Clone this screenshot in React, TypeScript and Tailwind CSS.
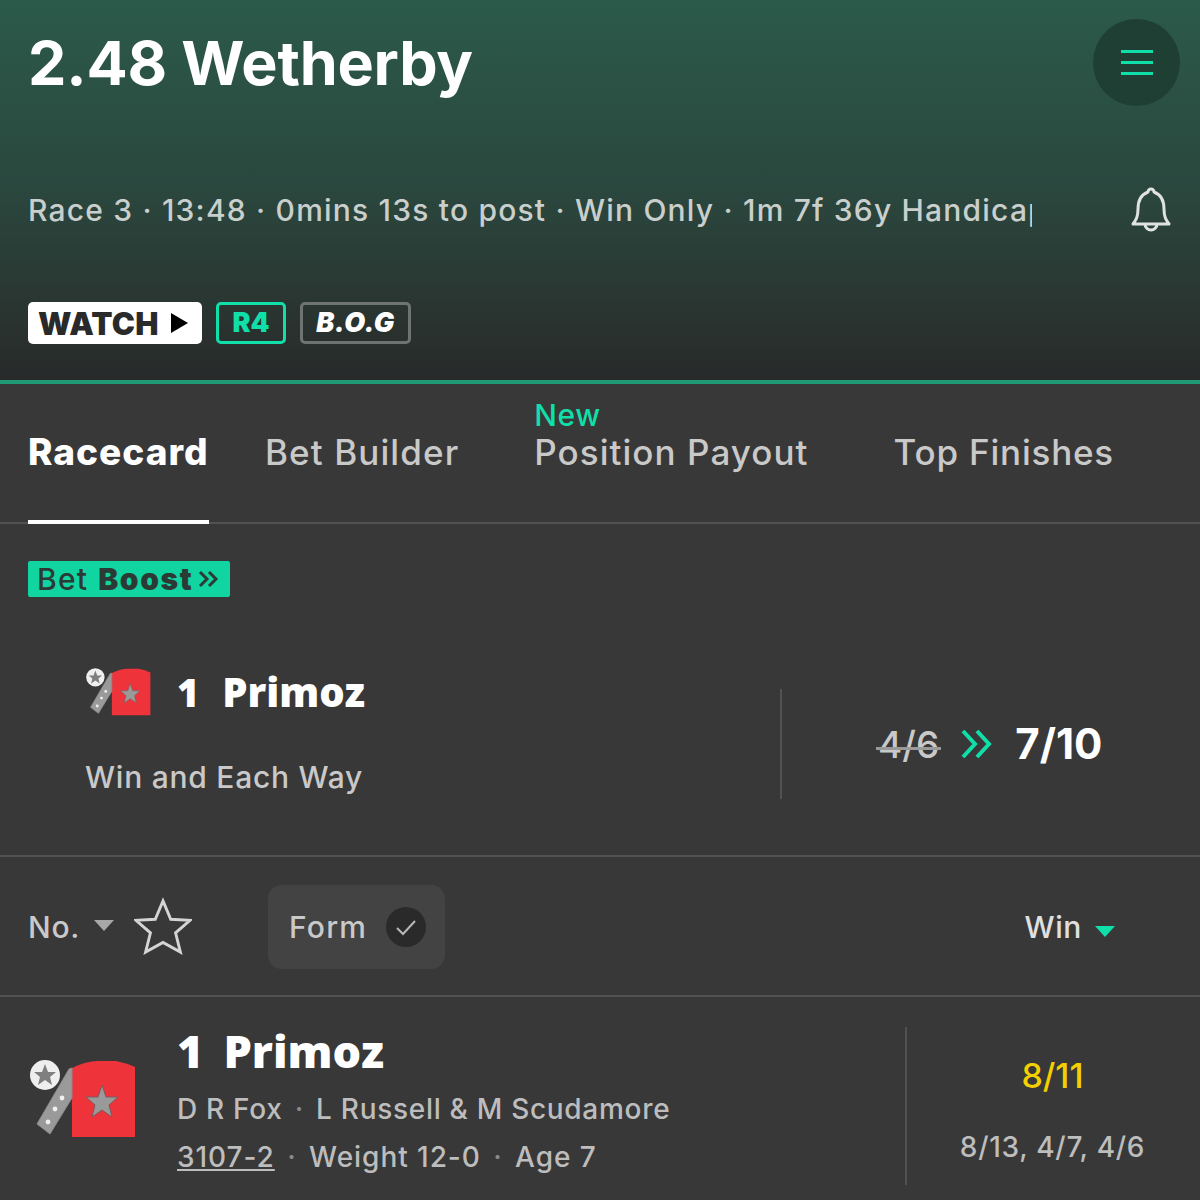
import React from "react";

function Silk({ scale }: { scale: "lg" | "sm" }) {
  const cls = scale === "lg" ? "w-[108px] h-[78px]" : "w-[66px] h-[48px]";
  return (
    <svg viewBox="0 0 108 78" className={cls}>
      <path d="M44 8 Q58 1 70 1 L88 1 Q98 3 107 7 L107 77 L44 77 Z" fill="#ee333b" />
      <path d="M41 9 L44 8 L44 38 L22 74 L9 64 Z" fill="#9a9a9a" stroke="#8a8a8a" />
      <circle cx="34" cy="38" r="2.4" fill="#eee" />
      <circle cx="27" cy="49" r="2.4" fill="#eee" />
      <circle cx="20" cy="62" r="2.4" fill="#eee" />
      <circle cx="17" cy="15" r="15" fill="#efefef" />
      <path d="M17 4 L20 12 L28 12 L22 17 L24 25 L17 20 L10 25 L12 17 L6 12 L14 12 Z" fill="#7f7f7f" />
      <path d="M74 25 L78 37 L90 37 L81 45 L84 57 L74 50 L64 57 L67 45 L58 37 L70 37 Z" fill="#9a9a9a" stroke="#7c5a5c" strokeWidth="1" />
    </svg>
  );
}

export default function App() {
  const inter = { fontFamily: 'Inter, "Liberation Sans", sans-serif' };
  const open = { fontFamily: '"Open Sans", "Noto Sans", sans-serif' };
  return (
    <div className="w-[1200px] h-[1200px] overflow-hidden bg-[#383838]" style={inter}>
      <header className="h-[384px] border-b-4 border-[#1f9a74] bg-gradient-to-b from-[#2b5a4a] via-[#2a473e] to-[#282a2a] pl-7 pr-[20px] pt-[20px] flex flex-col">
        <div className="flex justify-between items-start h-[86px]">
          <h1 className="text-[61px] leading-[86px] font-bold text-white tracking-[-0.2px] whitespace-nowrap">2.48 Wetherby</h1>
          <button className="w-[87px] h-[87px] -mt-[1px] rounded-full bg-[#1f3f35] flex flex-col items-center justify-center gap-[8px]">
            <span className="block w-[32px] h-[3px] bg-[#10dfa9]" />
            <span className="block w-[32px] h-[3px] bg-[#10dfa9]" />
            <span className="block w-[32px] h-[3px] bg-[#10dfa9]" />
          </button>
        </div>
        <div className="flex justify-between items-center mt-[79px] h-[50px]">
          <div className="w-[1004px] overflow-hidden whitespace-nowrap text-[30px] leading-[50px] font-medium text-[#c9cfcc] tracking-[1.2px]">
            Race 3 · 13:48 · 0mins 13s to post · Win Only · 1m 7f 36y Handicap
          </div>
          <svg viewBox="0 0 40 46" className="w-[40px] h-[46px] mr-[9px] fill-none stroke-[#dfe3e1] stroke-[3]">
            <path d="M20 2 a3 3 0 0 1 3 3 C31 8 33 15 33 22 C33 30 35 33 38 37 H2 C5 33 7 30 7 22 C7 15 9 8 17 5 a3 3 0 0 1 3 -3 Z" strokeLinejoin="round" />
            <path d="M14 37 a6 6 0 0 0 12 0" />
          </svg>
        </div>
        <div className="flex items-center gap-[14px] mt-[67px]">
          <div className="h-[42px] w-[174px] bg-white rounded-[5px] flex items-center pl-[10px] gap-[12px]">
            <span className="text-[31px] font-black text-[#2a2a2a] leading-none tracking-[0.3px]">WATCH</span>
            <span className="w-0 h-0 border-y-[10px] border-y-transparent border-l-[17px] border-l-black" />
          </div>
          <div className="h-[42px] w-[70px] border-[3px] border-[#10dfa9] rounded-[5px] flex items-center justify-center text-[27px] font-black text-[#10dfa9]">R4</div>
          <div className="h-[42px] w-[111px] border-[3px] border-[#6e7472] rounded-[5px] flex items-center justify-center text-[27px] font-black italic text-white tracking-[0.5px]">B.O.G</div>
        </div>
      </header>

      <nav className="h-[140px] border-b-2 border-[#525252] flex pl-7">
        <div className="w-[181px] h-[140px] border-b-4 border-white pt-[44px] shrink-0">
          <span className="text-[37px] leading-[48px] font-extrabold text-white whitespace-nowrap tracking-[1px]">Racecard</span>
        </div>
        <div className="ml-[56px] pt-[44px] text-[35px] leading-[48px] font-medium text-[#c9c9c9] whitespace-nowrap tracking-[1.1px]">Bet Builder</div>
        <div className="ml-[75px] relative pt-[44px] text-[35px] leading-[48px] font-medium text-[#c9c9c9] whitespace-nowrap tracking-[1.05px]">
          <span className="absolute left-0 top-[13px] text-[30px] leading-[36px] font-medium text-[#10dfa9] tracking-[0.6px]">New</span>
          Position Payout
        </div>
        <div className="ml-[85px] pt-[44px] text-[35px] leading-[48px] font-medium text-[#c9c9c9] whitespace-nowrap tracking-[0.8px]">Top Finishes</div>
      </nav>

      <section className="h-[333px] border-b-2 border-[#525252] flex flex-col pl-7">
        <div className="mt-[37px] w-[202px] h-[36px] bg-[#10d5a0] rounded-[2px] flex items-center pl-[9px] text-[30px] leading-none text-[#2c3a36] font-medium tracking-[1.2px] whitespace-nowrap">
          <span>Bet</span><span className="font-black ml-[10px] tracking-[1.6px]">Boost</span>
          <svg viewBox="0 0 22 18" className="w-[22px] h-[20px] ml-[5px] fill-none stroke-[#2c3a36] stroke-[3]"><path d="M2 2 L9 9 L2 16 M11 2 L18 9 L11 16" /></svg>
        </div>
        <div className="flex mt-[92px] pl-[57px] h-[110px]">
          <div className="w-[695px] shrink-0">
            <div className="flex items-center h-[48px] -mt-[21px]">
              <Silk scale="sm" />
              <span className="ml-[26px] text-[38px] font-extrabold text-white leading-none" style={open}>1</span>
              <span className="ml-[23px] text-[40px] font-extrabold text-white leading-none" style={open}>Primoz</span>
            </div>
            <div className="mt-[39px] text-[30px] leading-[44px] font-medium text-[#c9c9c9] tracking-[0.75px]">Win and Each Way</div>
          </div>
          <div className="w-[2px] h-[110px] bg-[#525252] shrink-0" />
          <div className="flex items-center pl-[96px] h-[110px]">
            <span className="relative text-[37px] leading-none font-medium text-[#c9c9c9]">
              4/6
              <span className="absolute -left-[2px] -right-[2px] top-[21px] h-[3px] bg-[#9a9a9a]" />
            </span>
            <svg viewBox="0 0 32 30" className="w-[32px] h-[30px] ml-[22px] fill-none stroke-[#10dfa9] stroke-[4]"><path d="M2 2 L14 15 L2 28 M16 2 L28 15 L16 28" /></svg>
            <span className="ml-[22px] text-[42px] font-bold text-white leading-none">7/10</span>
          </div>
        </div>
      </section>

      <section className="h-[140px] border-b-2 border-[#525252] flex items-center pl-7 pt-[2px]">
        <span className="text-[30px] font-medium text-[#c9c9c9] leading-none tracking-[0.7px]">No.</span>
        <span className="ml-[14px] -mt-[4px] w-0 h-0 border-x-[10px] border-x-transparent border-t-[11px] border-t-[#a8a8a8]" />
        <svg viewBox="0 0 60 60" className="ml-[20px] w-[58px] h-[60px] fill-none stroke-[#d4d4d4] stroke-[3]">
          <path d="M30 3 L38 22 L58 23 L43 36 L48 56 L30 46 L12 56 L17 36 L2 23 L22 22 Z" />
        </svg>
        <div className="ml-[76px] w-[177px] h-[84px] rounded-[14px] bg-[#434343] flex items-center pl-[21px]">
          <span className="text-[30px] font-medium leading-none text-[#c9c9c9] tracking-[1.2px]">Form</span>
          <span className="ml-[19px] w-[40px] h-[40px] rounded-full bg-[#2a2a2a] flex items-center justify-center">
            <svg viewBox="0 0 24 24" className="w-[24px] h-[24px] fill-none stroke-[#b8b8b8] stroke-2"><path d="M3 13 L9 19 L21 6" /></svg>
          </span>
        </div>
        <div className="ml-auto mr-[85px] flex items-center">
          <span className="text-[30px] font-medium leading-none text-[#e0e0e0] tracking-[0.6px]">Win</span>
          <span className="ml-[13px] mt-[8px] w-0 h-0 border-x-[10px] border-x-transparent border-t-[11px] border-t-[#10dfa9]" />
        </div>
      </section>

      <section className="flex pl-7 pt-[30px]">
        <div className="w-[149px] shrink-0 pt-[33px]"><Silk scale="lg" /></div>
        <div className="w-[728px] shrink-0">
          <div className="text-[45px] font-extrabold text-white leading-[52px] -mt-[2px]" style={open}>
            <span>1</span><span className="ml-[20px]">Primoz</span>
          </div>
          <div className="mt-[10px] text-[28px] leading-[44px] font-medium text-[#bdbdbd] tracking-[0.7px] whitespace-nowrap">
            D R Fox <span className="mx-[4px] text-[#8a8a8a]">·</span> L Russell &amp; M Scudamore
          </div>
          <div className="mt-[4px] text-[28px] leading-[44px] font-medium text-[#bdbdbd] tracking-[0.95px] whitespace-nowrap">
            <span className="underline">3107-2</span> <span className="mx-[4px] text-[#8a8a8a]">·</span> Weight 12-0 <span className="mx-[4px] text-[#8a8a8a]">·</span> Age 7
          </div>
        </div>
        <div className="w-[2px] h-[158px] bg-[#525252] shrink-0" />
        <div className="flex-1 flex flex-col items-center pr-[2px]">
          <div className="mt-[27px] text-[34px] leading-[44px] font-medium text-[#f5d000]">8/11</div>
          <div className="mt-[27px] text-[28px] leading-[44px] font-medium text-[#bdbdbd] tracking-[0.7px] whitespace-nowrap">8/13, 4/7, 4/6</div>
        </div>
      </section>
    </div>
  );
}
